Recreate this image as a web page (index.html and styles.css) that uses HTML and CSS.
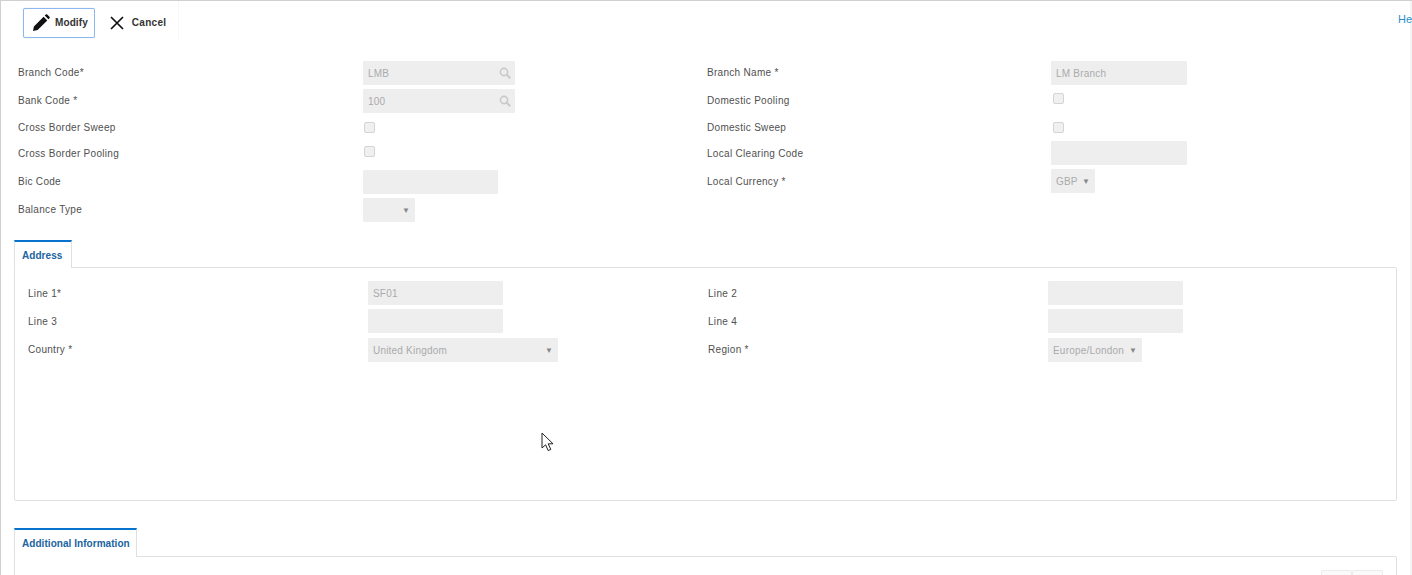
FILE: index.html
```html
<!DOCTYPE html>
<html lang="en">
<head>
<meta charset="utf-8">
<title>Branch</title>
<link rel="stylesheet" href="styles.css">
</head>
<body>
<div class="page">
  <header class="toolbar">
    <div class="actions">
      <button class="btn btn-focus" type="button">
        <svg class="icon" viewBox="0 0 18 18" width="18" height="18"><path d="M1 17l.9-4.6L11.6 2.7l3.7 3.7-9.7 9.7L1 17zM12.7 1.6l1.1-1.1c.4-.4 1-.4 1.4 0l2.3 2.3c.4.4.4 1 0 1.4l-1.1 1.1-3.7-3.7z" fill="#111"/></svg>
        <span>Modify</span>
      </button>
      <button class="btn btn-plain" type="button">
        <svg class="icon" viewBox="0 0 14 14" width="14" height="14"><path d="M1 1l12 12M13 1L1 13" stroke="#111" stroke-width="1.7" fill="none"/></svg>
        <span>Cancel</span>
      </button>
    </div>
    <a class="help" href="#">Help</a>
  </header>

  <section class="form main-form">
    <label class="lbl">Branch Code*</label>
    <div class="search w152"><input class="input" disabled value="LMB"><svg class="mag" viewBox="0 0 12 12" width="12" height="12"><circle cx="5" cy="5" r="3.6" fill="none" stroke="#c9c9c9" stroke-width="1.6"/><path d="M7.8 7.8l3.4 3.4" stroke="#c9c9c9" stroke-width="2"/></svg></div>
    <label class="lbl">Branch Name *</label>
    <input class="input w136" disabled value="LM Branch">

    <label class="lbl">Bank Code *</label>
    <div class="search w152"><input class="input" disabled value="100"><svg class="mag" viewBox="0 0 12 12" width="12" height="12"><circle cx="5" cy="5" r="3.6" fill="none" stroke="#c9c9c9" stroke-width="1.6"/><path d="M7.8 7.8l3.4 3.4" stroke="#c9c9c9" stroke-width="2"/></svg></div>
    <label class="lbl">Domestic Pooling</label>
    <div class="check-cell check-up check-right"><span class="check"></span></div>

    <label class="lbl mid">Cross Border Sweep</label>
    <div class="check-cell mid check-left"><span class="check"></span></div>
    <label class="lbl mid">Domestic Sweep</label>
    <div class="check-cell mid check-right"><span class="check"></span></div>

    <label class="lbl low">Cross Border Pooling</label>
    <div class="check-cell check-down check-left"><span class="check"></span></div>
    <label class="lbl low">Local Clearing Code</label>
    <input class="input w136" disabled>

    <label class="lbl low">Bic Code</label>
    <input class="input w135 nudge" disabled>
    <label class="lbl low">Local Currency *</label>
    <div class="select w44"><span>GBP</span><i class="arrow">▼</i></div>

    <label class="lbl">Balance Type</label>
    <div class="select w52"><span></span><i class="arrow">▼</i></div>
    <span></span>
    <span></span>
  </section>

  <section class="tabset first-tabset">
    <div class="tab">Address</div>
    <div class="panel address-panel">
      <div class="form address-form">
        <label class="lbl low">Line 1*</label>
        <input class="input w135" disabled value="SF01">
        <label class="lbl low">Line 2</label>
        <input class="input w135" disabled>

        <label class="lbl low">Line 3</label>
        <input class="input w135" disabled>
        <label class="lbl low">Line 4</label>
        <input class="input w135" disabled>

        <label class="lbl">Country *</label>
        <div class="select w190"><span>United Kingdom</span><i class="arrow">▼</i></div>
        <label class="lbl">Region *</label>
        <div class="select w94"><span>Europe/London</span><i class="arrow">▼</i></div>
      </div>
    </div>
  </section>

  <section class="tabset second-tabset">
    <div class="tab tab-tall">Additional Information</div>
    <div class="panel info-panel">
      <div class="mini-btns"><span class="mini"></span><span class="mini"></span></div>
    </div>
  </section>
</div>
<svg class="cursor" viewBox="0 0 14 20" width="14" height="20"><path d="M1 1v15l3.6-3.2 2.6 5.8 2.6-1.2-2.6-5.6H12L1 1z" fill="#fff" stroke="#222" stroke-width="1"/></svg>
</body>
</html>
```
FILE: styles.css
```css
html, body {
  margin: 0;
  height: 575px;
  overflow: hidden;
  background: #fff;
}
body {
  font-family: "Liberation Sans", Arial, sans-serif;
  font-size: 10px;
  color: #4f4f4f;
  position: relative;
}
.page {
  box-sizing: border-box;
  height: 575px;
  border-top: 1px solid #d0d0d0;
  border-left: 1px solid #d0d0d0;
  box-shadow: inset -2px 0 0 #f4f4f4;
  padding: 0 15px 0 13px;
  overflow: hidden;
}
.toolbar {
  display: flex;
  justify-content: space-between;
  height: 60px;
  margin-right: -15px;
}
.actions {
  display: flex;
  align-items: flex-start;
  height: 40px;
  width: 165px;
  padding: 7px 0 0 9px;
  border-right: 1px solid #f7f7f7;
  box-sizing: border-box;
}
.btn {
  display: flex;
  align-items: center;
  height: 30px;
  border: 1px solid transparent;
  border-radius: 2px;
  background: #fff;
  font: bold 10px "Liberation Sans", Arial, sans-serif;
  letter-spacing: .1px;
  color: #333;
}
.btn span { padding-bottom: 2px; }
.btn-focus {
  gap: 5px;
  padding: 0 6px 0 8px;
  border-color: #8db8ee;
  box-shadow: 0 0 1px #b8d3f5;
}
.btn-plain {
  gap: 8px;
  padding: 0 0 0 14px;
  letter-spacing: .3px;
}
.btn .icon { flex: none; }
.help {
  margin-top: 12px;
  width: 14px;
  overflow: hidden;
  color: #2a8fc9;
  font-size: 11px;
  line-height: 13px;
  text-decoration: none;
  white-space: nowrap;
}
.form {
  display: grid;
  align-items: start;
}
.main-form {
  grid-template-columns: 345px 344px 344px 1fr;
  grid-template-rows: 28px 24px 28px 28px 29px 28px;
  padding-left: 4px;
}
.address-form {
  grid-template-columns: 340px 340px 340px 1fr;
  grid-template-rows: 28px 29px 28px;
}
.lbl {
  line-height: 23px;
  white-space: nowrap;
  letter-spacing: .3px;
}
.lbl.low { line-height: 25px; }
.mid { align-self: center; }
.input {
  box-sizing: border-box;
  display: block;
  height: 24px;
  padding: 0 5px;
  border: 0;
  border-radius: 1px;
  background: #eeeeef;
  color: #aaa;
  font: 10px "Liberation Sans", Arial, sans-serif;
  letter-spacing: .2px;
  outline: none;
}
.nudge { margin-top: 1px; }
.w136 { width: 136px; }
.w135 { width: 135px; }
.search { position: relative; }
.search .input { width: 100%; }
.w152 { width: 152px; }
.mag { position: absolute; top: 6px; right: 4px; }
.select {
  box-sizing: border-box;
  display: flex;
  align-items: center;
  justify-content: space-between;
  height: 24px;
  padding: 0 5px;
  background: #eeeeef;
  color: #aaa;
  letter-spacing: .2px;
  border-radius: 1px;
}
.w44 { width: 44px; }
.w52 { width: 52px; }
.w190 { width: 190px; }
.w94 { width: 94px; }
.arrow {
  font-style: normal;
  font-size: 8px;
  color: #888;
}
.check-cell { line-height: 0; }
.check-up { padding-top: 4px; }
.check-down { padding-top: 5px; }
.check-left { padding-left: 1px; }
.check-right { padding-left: 2px; }
.check {
  display: inline-block;
  box-sizing: border-box;
  width: 11px;
  height: 11px;
  border: 1px solid #d4d4d4;
  border-radius: 2px;
  background: #f0f0f0;
}
.tabset { display: flex; flex-direction: column; }
.first-tabset { margin-top: 14px; }
.second-tabset { margin-top: 27px; }
.tab {
  box-sizing: border-box;
  align-self: flex-start;
  position: relative;
  z-index: 1;
  min-width: 58px;
  height: 28px;
  margin-bottom: -1px;
  padding: 0 6px 0 7px;
  border: 1px solid #e0e0e4;
  border-top: 2px solid #0572ce;
  border-bottom: 0;
  background: #fff;
  color: #20639f;
  font-weight: bold;
  font-size: 10px;
  letter-spacing: .05px;
  line-height: 28px;
}
.tab-tall { height: 29px; }
.panel {
  box-sizing: border-box;
  border: 1px solid #e0e0e4;
  border-radius: 2px;
  width: 1383px;
}
.address-panel {
  height: 234px;
  padding: 13px 13px 0;
}
.info-panel {
  height: 60px;
  padding: 13px 13px 0 0;
}
.mini-btns {
  display: flex;
  justify-content: flex-end;
}
.mini {
  box-sizing: border-box;
  width: 31px;
  height: 24px;
  border: 1px solid #ececec;
  border-radius: 2px;
  background: #fafafa;
}
.cursor {
  position: absolute;
  left: 541px;
  top: 432px;
}
```
